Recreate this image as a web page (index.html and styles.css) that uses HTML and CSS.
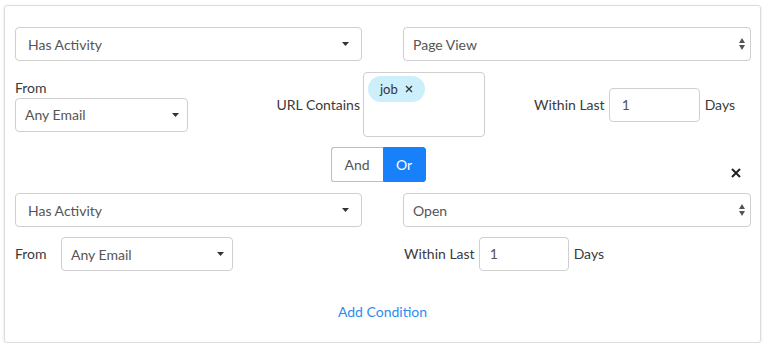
FILE: index.html
```html
<!DOCTYPE html>
<html lang="en">
<head>
  <meta charset="UTF-8">
  <meta name="viewport" content="width=device-width, initial-scale=1.0">
  <title>Segment Conditions</title>
  <link rel="stylesheet" href="styles.css">
</head>
<body>
  <div class="card">
    <div class="pair">
      <div class="select select-wide">
        <span>Has Activity</span>
        <svg class="caret" width="7" height="4" viewBox="0 0 7 4"><path d="M0 0h7L3.5 4z"/></svg>
      </div>
      <div class="select">
        <span>Page View</span>
        <svg class="updown" width="6" height="12" viewBox="0 0 6 12"><path d="M3 0l3 5H0zM0 7h6l-3 5z"/></svg>
      </div>
    </div>

    <div class="cond-row">
      <div class="from-group">
        <label>From</label>
        <div class="select">
          <span>Any Email</span>
          <svg class="caret" width="7" height="4" viewBox="0 0 7 4"><path d="M0 0h7L3.5 4z"/></svg>
        </div>
      </div>
      <div class="url-group">
        <label>URL Contains</label>
        <div class="tag-box">
          <span class="tag">job
            <svg class="tag-x" width="8" height="8" viewBox="0 0 8 8"><path d="M1 1l6 6M7 1L1 7" stroke="#333" stroke-width="1.3"/></svg>
          </span>
        </div>
      </div>
      <div class="within-group">
        <label>Within Last</label>
        <div class="input">1</div>
        <label>Days</label>
      </div>
    </div>

    <div class="joiner">
      <div></div>
      <div class="seg">
        <button class="seg-btn">And</button>
        <button class="seg-btn active">Or</button>
      </div>
      <div class="close">
        <svg width="10" height="10" viewBox="0 0 10 10"><path d="M1 1l8 8M9 1l-8 8" stroke="#222" stroke-width="2"/></svg>
      </div>
    </div>

    <div class="pair">
      <div class="select select-wide">
        <span>Has Activity</span>
        <svg class="caret" width="7" height="4" viewBox="0 0 7 4"><path d="M0 0h7L3.5 4z"/></svg>
      </div>
      <div class="select">
        <span>Open</span>
        <svg class="updown" width="6" height="12" viewBox="0 0 6 12"><path d="M3 0l3 5H0zM0 7h6l-3 5z"/></svg>
      </div>
    </div>

    <div class="pair pair-inline">
      <div class="inline-group">
        <label class="from-inline">From</label>
        <div class="select select-from">
          <span>Any Email</span>
          <svg class="caret" width="7" height="4" viewBox="0 0 7 4"><path d="M0 0h7L3.5 4z"/></svg>
        </div>
      </div>
      <div class="inline-group within-inline">
        <label>Within Last</label>
        <div class="input input-small">1</div>
        <label>Days</label>
      </div>
    </div>

    <div class="add">Add Condition</div>
  </div>
</body>
</html>
```

FILE: styles.css
```css
body {
  margin: 0;
  font-family: Lato, "Open Sans", Arial, sans-serif;
  font-size: 14px;
  color: #3b3b3b;
  background-color: #fff;
}
.card {
  width: 735px;
  margin: 5px 0 0 4px;
  padding: 21px 10px 20px 10px;
  border: 1px solid #dcdcdc;
  border-radius: 3px;
  box-shadow: 0 1px 3px rgba(0, 0, 0, 0.12);
}
label {
  color: #3a3a3a;
  line-height: 20px;
}
.pair {
  display: grid;
  grid-template-columns: 347px 348px;
  column-gap: 41px;
}
.select {
  height: 32px;
  border: 1px solid #cfcfcf;
  border-radius: 4px;
  display: flex;
  align-items: center;
  justify-content: space-between;
  padding: 0 5px 0 9px;
  color: #555;
  background-color: #fff;
}
.select-wide {
  padding-left: 12px;
  padding-right: 9px;
}
.select .caret {
  fill: #333;
  margin-right: 3px;
}
.select .updown {
  fill: #555;
}

/* first condition details */
.cond-row {
  display: grid;
  grid-template-columns: 173px 297px 1fr;
  align-items: center;
  margin-top: 11px;
  height: 65px;
}
.from-group label {
  display: block;
}
.url-group {
  display: flex;
  align-items: center;
  justify-content: flex-end;
}
.url-group label {
  margin-right: 3px;
}
.tag-box {
  width: 122px;
  height: 65px;
  border: 1px solid #cfcfcf;
  border-radius: 4px;
  padding: 3px 4px;
  box-sizing: border-box;
}
.tag {
  display: inline-flex;
  align-items: center;
  height: 26px;
  padding: 0 12px;
  border-radius: 13px;
  background-color: #cdeefb;
  color: #333;
  font-size: 13px;
}
.tag-x {
  margin-left: 7px;
}
.within-group {
  display: flex;
  align-items: center;
  padding-left: 49px;
}
.input {
  width: 77px;
  height: 32px;
  line-height: 32px;
  border: 1px solid #cfcfcf;
  border-radius: 4px;
  padding: 0 0 0 12px;
  margin: 0 5px 0 4px;
  color: #555;
}
.input-small {
  width: 78px;
  padding-left: 10px;
}

/* and / or */
.joiner {
  display: grid;
  grid-template-columns: 1fr auto 1fr;
  margin-top: 10px;
}
.seg {
  display: flex;
  margin-right: 9px;
}
.seg-btn {
  font-family: inherit;
  font-size: 14px;
  height: 35px;
  border: 1px solid #bdbdbd;
  background-color: #fff;
  color: #555;
  padding: 0 12px;
  cursor: pointer;
}
.seg-btn:first-child {
  width: 52px;
  border-radius: 3px 0 0 3px;
  border-right: none;
}
.seg-btn.active {
  width: 43px;
  background-color: #1780fa;
  border-color: #1780fa;
  color: #fff;
  border-radius: 0 3px 3px 0;
}
.close {
  justify-self: end;
  align-self: end;
  margin: 0 9px 4px 0;
  line-height: 0;
}

.joiner + .pair {
  margin-top: 11px;
}
.pair-inline {
  margin-top: 10px;
}
.inline-group {
  display: flex;
  align-items: center;
}
.from-inline {
  width: 46px;
}
.select-from {
  width: 156px;
}
.within-inline {
  padding-left: 1px;
}

.add {
  margin-top: 31px;
  text-align: center;
  line-height: 20px;
  color: #2d8cf0;
  cursor: pointer;
}
```
